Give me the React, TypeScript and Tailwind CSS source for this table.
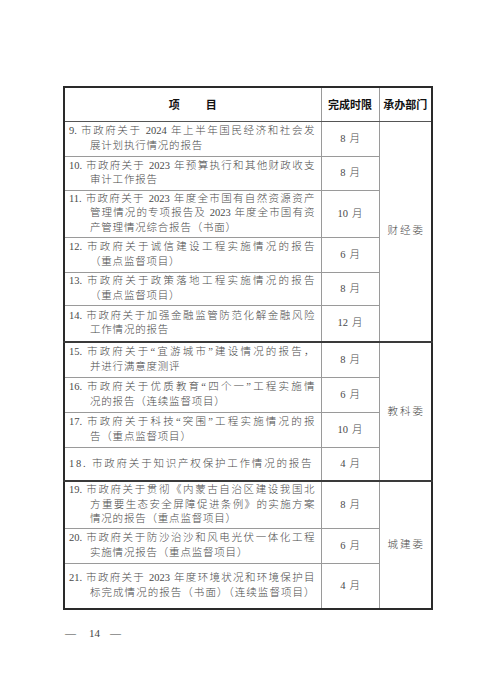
import React from "react";

type Item = {
  lines: string[];
  month: string;
  // how many lines are stretched to the full cell width
  justify: number;
  h: number;
  wide?: boolean;
};

type Group = { dept: string; items: Item[] };

const groups: Group[] = [
  {
    dept: "财经委",
    items: [
      { lines: ["9. 市政府关于 2024 年上半年国民经济和社会发", "展计划执行情况的报告"], month: "8", justify: 1, h: 35 },
      { lines: ["10. 市政府关于 2023 年预算执行和其他财政收支", "审计工作报告"], month: "8", justify: 1, h: 34 },
      {
        lines: ["11. 市政府关于 2023 年度全市国有自然资源资产", "管理情况的专项报告及 2023 年度全市国有资", "产管理情况综合报告（书面）"],
        month: "10",
        justify: 2,
        h: 47,
      },
      { lines: ["12. 市政府关于诚信建设工程实施情况的报告", "（重点监督项目）"], month: "6", justify: 1, h: 35 },
      { lines: ["13. 市政府关于政策落地工程实施情况的报告", "（重点监督项目）"], month: "8", justify: 1, h: 33 },
      { lines: ["14. 市政府关于加强金融监管防范化解金融风险", "工作情况的报告"], month: "12", justify: 1, h: 37 },
    ],
  },
  {
    dept: "教科委",
    items: [
      { lines: ["15. 市政府关于“宜游城市”建设情况的报告，", "并进行满意度测评"], month: "8", justify: 1, h: 35 },
      { lines: ["16. 市政府关于优质教育“四个一”工程实施情", "况的报告（连续监督项目）"], month: "6", justify: 1, h: 35 },
      { lines: ["17. 市政府关于科技“突围”工程实施情况的报", "告（重点监督项目）"], month: "10", justify: 1, h: 35 },
      { lines: ["18. 市政府关于知识产权保护工作情况的报告"], month: "4", justify: 0, h: 34, wide: true },
    ],
  },
  {
    dept: "城建委",
    items: [
      {
        lines: ["19. 市政府关于贯彻《内蒙古自治区建设我国北", "方重要生态安全屏障促进条例》的实施方案", "情况的报告（重点监督项目）"],
        month: "8",
        justify: 2,
        h: 47,
      },
      { lines: ["20. 市政府关于防沙治沙和风电光伏一体化工程", "实施情况报告（重点监督项目）"], month: "6", justify: 1, h: 35 },
      {
        lines: ["21. 市政府关于 2023 年度环境状况和环境保护目", "标完成情况的报告（书面）（连续监督项目）"],
        month: "4",
        justify: 2,
        h: 46,
      },
    ],
  },
];

const font = { fontFamily: '"Liberation Serif", "Noto Sans CJK SC", serif' };
const heiti = { fontFamily: '"Noto Sans CJK SC", "Liberation Sans", sans-serif' };

function ItemText({ item }: { item: Item }) {
  return (
    <div className="text-[10.5px] leading-[14.5px] text-[#4a4a4a] font-light">
      {item.lines.map((line, i) => {
        const stretched = i < item.justify;
        return (
          <div
            key={i}
            className={
              (i > 0 ? "pl-[21px] " : "") +
              (stretched
                ? "text-justify [text-align-last:justify]"
                : item.wide
                  ? "whitespace-nowrap tracking-[1.8px]"
                  : "whitespace-nowrap tracking-[0.8px]")
            }
          >
            {line}
          </div>
        );
      })}
    </div>
  );
}

export default function App() {
  return (
    <div className="min-h-[700px] w-[495px] bg-white pt-[86px] pl-[63px]" style={font}>
      <table className="w-[368px] table-fixed border-collapse border-2 border-[#2a2a2a]">
        <colgroup>
          <col className="w-[257px]" />
          <col className="w-[58px]" />
          <col className="w-[53px]" />
        </colgroup>
        <thead>
          <tr className="h-[34px]">
            <th className="border border-[#9a9a9a] border-b-[#555]" style={heiti}>
              <div className="flex justify-center gap-[26px] text-[11px] font-bold text-[#111]">
                <span>项</span>
                <span>目</span>
              </div>
            </th>
            <th className="border border-[#9a9a9a] border-b-[#555] text-[11px] font-bold text-[#111]" style={heiti}>
              完成时限
            </th>
            <th className="border border-[#9a9a9a] border-b-[#555] text-[11px] font-bold text-[#111]" style={heiti}>
              承办部门
            </th>
          </tr>
        </thead>
        <tbody>
          {groups.map((g, gi) =>
            g.items.map((item, ii) => {
              const last = ii === g.items.length - 1 && gi < groups.length - 1;
              const bottom = last ? " border-b-2 border-b-[#3a3a3a]" : "";
              return (
                <tr key={gi + "-" + ii} style={{ height: item.h }}>
                  <td className={"border border-[#9a9a9a] pl-[4px] pr-[6px] align-middle" + bottom}>
                    <ItemText item={item} />
                  </td>
                  <td className={"border border-[#9a9a9a] text-center align-middle text-[10.5px] text-[#4a4a4a] font-light" + bottom}>
                    <span>{item.month}</span>
                    <span className="ml-[4px]">月</span>
                  </td>
                  {ii === 0 && (
                    <td
                      rowSpan={g.items.length}
                      className={
                        "border border-[#9a9a9a] pl-[2px] text-center align-middle text-[10.5px] tracking-[2px] text-[#4a4a4a] font-light" +
                        (gi < groups.length - 1 ? " border-b-2 border-b-[#3a3a3a]" : "")
                      }
                    >
                      {g.dept}
                    </td>
                  )}
                </tr>
              );
            })
          )}
        </tbody>
      </table>
      <div className="mt-[15px] flex items-center text-[11px] text-[#444]">
        <span className="ml-[2px]">—</span>
        <span className="ml-[13px]">14</span>
        <span className="ml-[10px]">—</span>
      </div>
    </div>
  );
}
